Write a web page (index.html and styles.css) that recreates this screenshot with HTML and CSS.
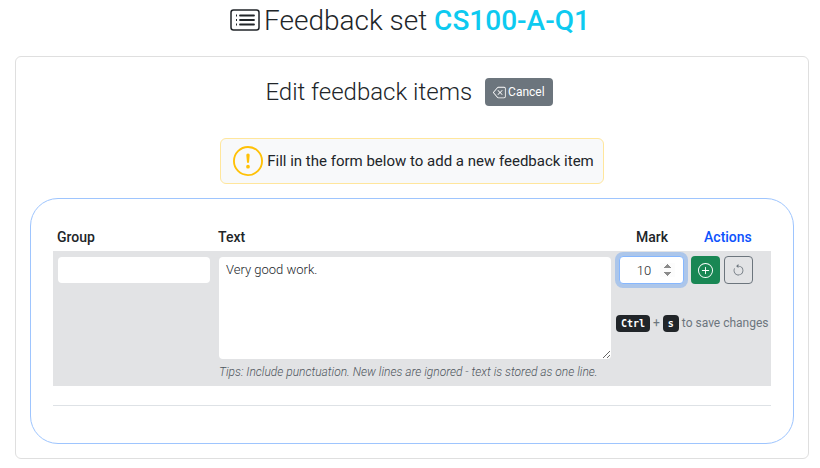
FILE: index.html
```
<!DOCTYPE html>
<html lang="en">
<head>
  <meta charset="utf-8">
  <title>Feedback set CS100-A-Q1</title>
  <link rel="stylesheet" href="styles.css">
</head>
<body>

  <h1 class="page-title">
    <svg class="icon-list" viewBox="0 0 30 24" fill="none" stroke="currentColor" aria-hidden="true">
      <rect x="1" y="1" width="28" height="20" rx="2.5" stroke-width="1.5"/>
      <path d="M10 6.5h14M10 11h14M10 15.500h14" stroke-width="1.8" stroke-linecap="round"/>
      <path d="M6 6.500h1M6 11h1M6 15.500h1" stroke-width="1.8"/>
    </svg>
    <span>Feedback set <span class="set-name">CS100-A-Q1</span></span>
  </h1>

  <div class="card">
    <div class="card-heading">
      <h2>Edit feedback items</h2>
      <button type="button" class="btn btn-cancel">
        <svg class="icon-sm" viewBox="0 0 16 16" fill="currentColor" aria-hidden="true">
          <path d="M5.830 5.146a.5.5 0 0 0 0 .708L7.975 8l-2.147 2.146a.5.5 0 0 0 .707.708l2.147-2.147 2.146 2.147a.5.5 0 0 0 .707-.708L9.390 8l2.146-2.146a.5.5 0 0 0-.707-.708L8.683 7.293 6.536 5.146a.5.5 0 0 0-.707 0z"/>
          <path d="M13.683 1a2 2 0 0 1 2 2v10a2 2 0 0 1-2 2h-7.080a2 2 0 0 1-1.519-.698L.241 8.650a1 1 0 0 1 0-1.302L5.084 1.700A2 2 0 0 1 6.603 1zm-7.080 1a1 1 0 0 0-.76.350L1 8l4.844 5.650a1 1 0 0 0 .759.350h7.080a1 1 0 0 0 1-1V3a1 1 0 0 0-1-1z"/>
        </svg>
        Cancel
      </button>
    </div>

    <div class="notice">
      <svg class="icon-notice" viewBox="0 0 16 16" fill="currentColor" aria-hidden="true">
        <path d="M8 15A7 7 0 1 1 8 1a7 7 0 0 1 0 14m0 1A8 8 0 1 0 8 0a8 8 0 0 0 0 16"/>
        <path d="M7.002 11a1 1 0 1 1 2 0 1 1 0 0 1-2 0M7.100 4.995a.905.905 0 1 1 1.800 0l-.35 3.507a.552.552 0 0 1-1.100 0z"/>
      </svg>
      <span>Fill in the form below to add a new feedback item</span>
    </div>

    <form class="items">
      <div class="items-grid items-head">
        <label for="group">Group</label>
        <label for="text">Text</label>
        <div class="head-mark">
          <label for="mark">Mark</label>
          <span class="head-actions">Actions</span>
        </div>
      </div>

      <div class="items-grid items-row">
        <div class="cell-group">
          <input type="text" id="group" class="field">
        </div>
        <div class="cell-text">
          <textarea id="text" class="field">Very good work.</textarea>
          <p class="tips">Tips: Include punctuation. New lines are ignored - text is stored as one line.</p>
        </div>
        <div class="cell-mark">
          <div class="controls">
            <input type="number" id="mark" class="field mark" value="10" autofocus>
            <button type="submit" class="btn btn-add" aria-label="Add">
              <svg class="icon-md" viewBox="0 0 16 16" fill="currentColor" aria-hidden="true">
                <path d="M8 15A7 7 0 1 1 8 1a7 7 0 0 1 0 14m0 1A8 8 0 1 0 8 0a8 8 0 0 0 0 16"/>
                <path d="M8 4a.5.5 0 0 1 .5.5v3h3a.5.5 0 0 1 0 1h-3v3a.5.5 0 0 1-1 0v-3h-3a.5.5 0 0 1 0-1h3v-3A.5.5 0 0 1 8 4"/>
              </svg>
            </button>
            <button type="reset" class="btn btn-reset" aria-label="Reset">
              <svg class="icon-sm" viewBox="0 0 16 16" fill="currentColor" aria-hidden="true">
                <path fill-rule="evenodd" d="M8 3a5 5 0 1 1-4.546 2.914.5.5 0 0 0-.908-.417A6 6 0 1 0 8 2z"/>
                <path d="M8 4.466V.534a.25.25 0 0 0-.41-.192L5.230 2.308a.25.25 0 0 0 0 .384l2.360 1.966A.25.25 0 0 0 8 4.466"/>
              </svg>
            </button>
          </div>
          <p class="shortcut"><kbd>Ctrl</kbd> + <kbd>s</kbd> to save changes</p>
        </div>
      </div>

      <hr>
    </form>
  </div>

</body>
</html>
```

FILE: styles.css
```
* { box-sizing: border-box; }

body {
  margin: 0;
  padding: 0 11px 10px 15px;
  font-family: Roboto, "Noto Sans", sans-serif;
  font-size: 15px;
  line-height: 24px;
  color: #212529;
  background: #fff;
}

h1, h2, p { margin: 0; }
h1, h2 { font-weight: 300; }

svg { flex: none; }

/* page heading */
.page-title {
  display: flex;
  justify-content: center;
  align-items: center;
  gap: 4px;
  padding: 3px 4px 17px 0;
  font-size: 28px;
  line-height: 36px;
}
.set-name { color: #0dcaf0; font-weight: 500; }
.icon-list { width: 30px; height: 24px; }
.icon-sm { width: 13px; height: 13px; }
.icon-md { width: 15px; height: 15px; }

.card {
  padding: 18px 14px 14px;
  border: 1px solid #dfdfdf;
  border-radius: 6px;
}
.card-heading {
  display: flex;
  justify-content: center;
  align-items: center;
  gap: 13px;
  padding-right: 6px;
}
.card-heading h2 {
  font-size: 24px;
  line-height: 34px;
}

/* buttons */
.btn {
  display: flex;
  align-items: center;
  justify-content: center;
  height: 28px;
  padding: 0 8px;
  border: 1px solid transparent;
  border-radius: 4px;
  font-family: inherit;
  font-size: 12px;
}
.btn-cancel { gap: 2px; padding: 0 7px; color: #fff; background: #6c757d; }
.btn-add { width: 29px; padding: 0; color: #fff; background: #198754; }
.btn-reset { width: 29px; padding: 0; color: #6c757d; border-color: #6c757d; background: none; }

.notice {
  display: flex;
  align-items: center;
  gap: 4px;
  width: fit-content;
  margin: 29px auto 14px;
  padding: 7px 9px 7px 12px;
  border: 1px solid #ffe69c;
  border-radius: 6px;
  background: #f8f9fa;
}
.icon-notice { width: 30px; height: 30px; color: #ffc107; }

/* items form */
.items {
  padding: 23px 22px 37px;
  border: 1px solid #9ec5fe;
  border-radius: 28px;
}
.items-grid {
  display: grid;
  grid-template-columns: 161px 1fr 155px;
  padding-left: 5px;
}
.items-head {
  padding: 3px 0 2px 4px;
  font-weight: 500;
  font-size: 14px;
}
.head-mark { display: flex; gap: 36px; padding-left: 20px; }
.head-actions { color: #0d52fd; }

.items-row {
  padding-top: 5px;
  padding-bottom: 3px;
  background: #e2e3e5;
}
.cell-group { padding: 1px 9px 0 0; }
.cell-text { padding: 1px 5px 0 0; }

.field {
  display: block;
  width: 100%;
  height: 26px;
  padding: 2px 8px;
  border: 0;
  border-radius: 4px;
  font-family: inherit;
  font-size: 13px;
  line-height: 20px;
  font-weight: 300;
  color: #212529;
  background: #fff;
}
textarea.field {
  height: 102px;
  padding: 3px 7px;
  resize: vertical;
}

.controls {
  display: flex;
  align-items: center;
  gap: 4px;
  padding-left: 3px;
}
.mark {
  width: 65px;
  height: 28px;
  margin-right: 3px;
  text-align: center;
  border: 1px solid #86b7fe;
}
.mark:focus {
  outline: 0;
  box-shadow: 0 0 0 4px rgba(13, 110, 253, .25);
}
.mark::-webkit-inner-spin-button { opacity: 1; }

.tips {
  margin-top: 2px;
  font-size: 12px;
  line-height: 22px;
  font-style: italic;
  font-weight: 300;
  color: #4f565d;
}
.shortcut {
  margin-top: 27px;
  font-size: 12px;
  color: #6c757d;
  white-space: nowrap;
}
kbd {
  padding: 3px 5px;
  border-radius: 4px;
  font-family: "DejaVu Sans Mono", monospace;
  font-size: 10px;
  font-weight: 700;
  color: #fff;
  background: #212529;
}

hr {
  margin: 19px 0 0;
  border: 0;
  border-top: 1px solid #dee2e6;
}
```
